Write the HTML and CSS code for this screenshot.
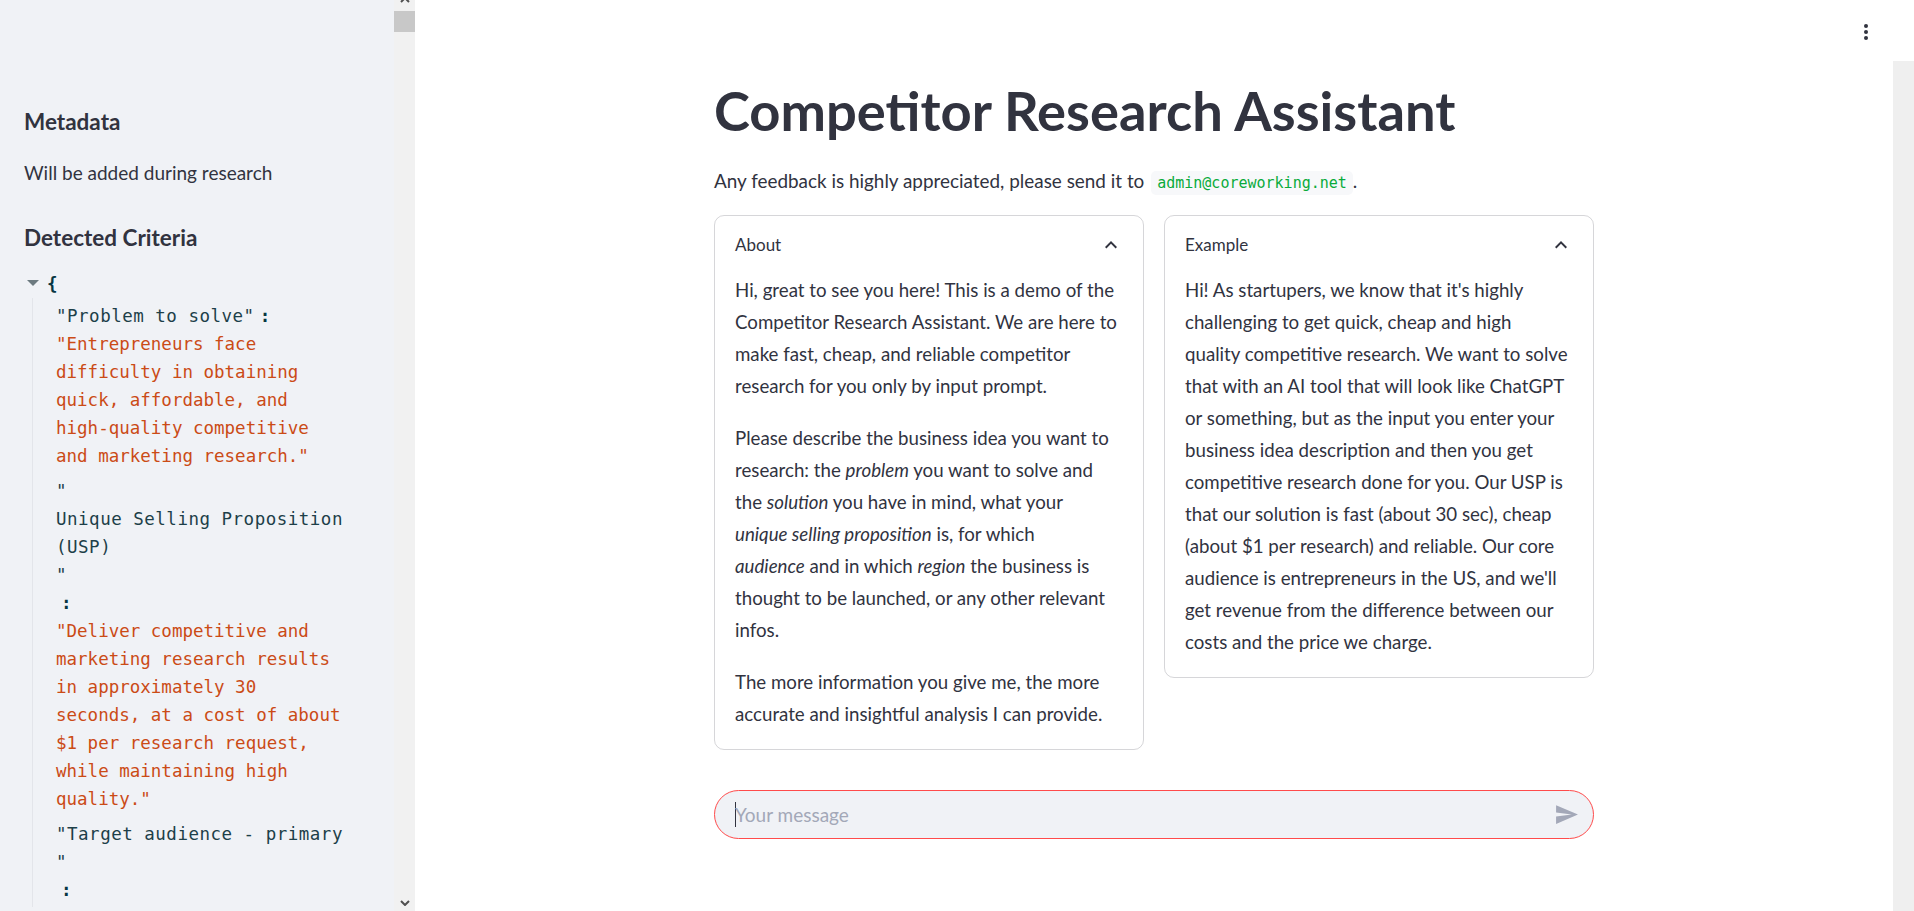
FILE: index.html
```html
<!DOCTYPE html>
<html lang="en">
<head>
<meta charset="utf-8">
<title>Competitor Research Assistant</title>
<link rel="stylesheet" href="styles.css">
</head>
<body>
<div class="app">
  <aside class="sidebar">
    <div class="sidebar-content">
      <h3 class="side-heading">Metadata</h3>
      <p class="side-text">Will be added during research</p>
      <h3 class="side-heading side-heading-2">Detected Criteria</h3>
      <div class="json">
        <div class="json-open"><span class="caret"></span><span class="brace">{</span></div>
        <div class="json-body">
          <div class="json-row">
            <div class="json-line"><span class="json-key">"Problem to solve"</span><span class="json-colon">:</span></div>
            <div class="json-string">"Entrepreneurs face<br>difficulty in obtaining<br>quick, affordable, and<br>high-quality competitive<br>and marketing research."</div>
          </div>
          <div class="json-row">
            <div class="json-key json-key-block">"<br>Unique Selling Proposition<br>(USP)<br>"</div>
            <div class="json-line"><span class="json-colon">:</span></div>
            <div class="json-string">"Deliver competitive and<br>marketing research results<br>in approximately 30<br>seconds, at a cost of about<br>$1 per research request,<br>while maintaining high<br>quality."</div>
          </div>
          <div class="json-row">
            <div class="json-key json-key-block">"Target audience - primary<br>"</div>
            <div class="json-line"><span class="json-colon">:</span></div>
          </div>
        </div>
      </div>
    </div>
    <div class="side-scroll">
      <svg class="scroll-arrow scroll-arrow-up" width="10" height="6" viewBox="0 0 10 6"><path d="M1 5 L5 1 L9 5" fill="none" stroke="#505050" stroke-width="2"/></svg>
      <div class="scroll-thumb"></div>
      <div class="scroll-fill"></div>
      <svg class="scroll-arrow scroll-arrow-down" width="10" height="6" viewBox="0 0 10 6"><path d="M1 1 L5 5 L9 1" fill="none" stroke="#505050" stroke-width="2"/></svg>
    </div>
  </aside>

  <main class="main">
    <header class="topbar">
      <svg class="menu-dots" width="4" height="16" viewBox="0 0 4 16"><circle cx="2" cy="2" r="2" fill="#31333f"/><circle cx="2" cy="8" r="2" fill="#31333f"/><circle cx="2" cy="14" r="2" fill="#31333f"/></svg>
    </header>
    <div class="main-body">
      <div class="content">
        <div class="block">
          <h1 class="title">Competitor Research Assistant</h1>
          <p class="feedback">Any feedback is highly appreciated, please send it to <code class="code">admin@coreworking.net</code>.</p>

          <div class="cards">
            <section class="card">
              <div class="card-header">
                <span class="card-label">About</span>
                <svg class="chevron" width="24" height="24" viewBox="0 0 24 24"><path d="M12 8l-6 6 1.41 1.41L12 10.83l4.59 4.58L18 14z" fill="#31333f"/></svg>
              </div>
              <div class="card-body">
                <p>Hi, great to see you here! This is a demo of the<br>Competitor Research Assistant. We are here to<br>make fast, cheap, and reliable competitor<br>research for you only by input prompt.</p>
                <p>Please describe the business idea you want to<br>research: the <em>problem</em> you want to solve and<br>the <em>solution</em> you have in mind, what your<br><em>unique selling proposition</em> is, for which<br><em>audience</em> and in which <em>region</em> the business is<br>thought to be launched, or any other relevant<br>infos.</p>
                <p>The more information you give me, the more<br>accurate and insightful analysis I can provide.</p>
              </div>
            </section>
            <section class="card">
              <div class="card-header">
                <span class="card-label">Example</span>
                <svg class="chevron" width="24" height="24" viewBox="0 0 24 24"><path d="M12 8l-6 6 1.41 1.41L12 10.83l4.59 4.58L18 14z" fill="#31333f"/></svg>
              </div>
              <div class="card-body">
                <p>Hi! As startupers, we know that it's highly<br>challenging to get quick, cheap and high<br>quality competitive research. We want to solve<br>that with an AI tool that will look like ChatGPT<br>or something, but as the input you enter your<br>business idea description and then you get<br>competitive research done for you. Our USP is<br>that our solution is fast (about 30 sec), cheap<br>(about $1 per research) and reliable. Our core<br>audience is entrepreneurs in the US, and we'll<br>get revenue from the difference between our<br>costs and the price we charge.</p>
              </div>
            </section>
          </div>

          <div class="chat-input">
            <span class="text-caret"></span>
            <span class="placeholder">Your message</span>
            <svg class="send" width="25" height="25" viewBox="0 0 24 24"><path d="M2.01 21L23 12 2.01 3 2 10l15 2-15 2z" fill="#a3a8b8"/></svg>
          </div>
        </div>
      </div>
      <div class="main-track"></div>
    </div>
  </main>
</div>
</body>
</html>
```

FILE: styles.css
```css
* { box-sizing: border-box; }

html, body {
  margin: 0;
  padding: 0;
}

body {
  width: 1914px;
  height: 911px;
  overflow: hidden;
  background: #ffffff;
  color: #31333f;
  font-family: "Source Sans Pro", Lato, "Noto Sans", sans-serif;
}

.app {
  display: flex;
  height: 911px;
}

/* ---------- Sidebar ---------- */
.sidebar {
  width: 415px;
  flex: none;
  display: flex;
  background: #f0f2f6;
  overflow: hidden;
}

.sidebar-content {
  flex: 1;
  min-width: 0;
  padding: 107px 0 0 24px;
}

.side-heading {
  margin: 0;
  font-size: 22.5px;
  font-weight: 700;
  line-height: 29px;
  color: #31333f;
}

.side-heading-2 {
  margin-top: 34px;
}

.side-text {
  margin: 21px 0 0;
  font-size: 19px;
  line-height: 32px;
}

.json {
  margin-top: 18px;
  font-family: "DejaVu Sans Mono", "Liberation Mono", monospace;
  font-size: 17.5px;
  line-height: 28px;
}

.json-open {
  display: flex;
  align-items: center;
  height: 28px;
}

.caret {
  width: 0;
  height: 0;
  margin: 0 8px 3px 3px;
  border-left: 6px solid transparent;
  border-right: 6px solid transparent;
  border-top: 6px solid #6c7a80;
}

.brace {
  color: #073642;
  font-weight: bold;
}

.json-body {
  margin-left: 8px;
  border-left: 1px solid #e3e5ea;
  padding-left: 23px;
}

.json-row {
  padding: 3.5px 0;
}

.json-key {
  color: #1d3f49;
  letter-spacing: 0.5px;
}

.json-key-block {
  display: block;
}

.json-colon {
  display: inline-block;
  margin: 0 5px;
  color: #073642;
  font-weight: bold;
}

.json-string {
  color: #cb4b16;
  white-space: nowrap;
}

.side-scroll {
  width: 21px;
  flex: none;
  display: flex;
  flex-direction: column;
  align-items: center;
  background: #f1f1f1;
}

.scroll-arrow-up {
  margin-top: -3px;
  flex: none;
}

.scroll-thumb {
  width: 21px;
  height: 21px;
  margin-top: 8px;
  background: #c8c8c8;
  flex: none;
}

.scroll-fill {
  flex: 1;
}

.scroll-arrow-down {
  margin-bottom: 5px;
  flex: none;
}

/* ---------- Main ---------- */
.main {
  flex: 1;
  min-width: 0;
  display: flex;
  flex-direction: column;
}

.topbar {
  height: 61px;
  flex: none;
  display: flex;
  justify-content: flex-end;
  align-items: flex-start;
  padding: 24px 46px 0 0;
}

.main-body {
  flex: 1;
  min-height: 0;
  display: flex;
}

.content {
  flex: 1;
  display: flex;
  justify-content: center;
}

.main-track {
  width: 21px;
  flex: none;
  background: #efefef;
}

.block {
  width: 880px;
  padding-top: 16px;
}

.title {
  margin: 0;
  font-size: 54.3px;
  line-height: 66px;
  font-weight: 700;
  color: #31333f;
}

.feedback {
  margin: 21.5px 0 0;
  font-size: 18.9px;
  line-height: 32px;
}

.code {
  font-family: "DejaVu Sans Mono", "Liberation Mono", monospace;
  font-size: 15px;
  color: #09ab3b;
  background: #f7f8fa;
  padding: 3px 6px;
  border-radius: 5px;
  margin-left: 2px;
}

.cards {
  display: flex;
  align-items: flex-start;
  gap: 20px;
  margin-top: 16px;
}

.card {
  flex: 1;
  min-width: 0;
  border: 1px solid rgba(49, 51, 63, 0.2);
  border-radius: 10px;
}

.card-header {
  display: flex;
  align-items: center;
  justify-content: space-between;
  padding: 17px 20px 17px;
  font-size: 17px;
  line-height: 24px;
}

.card-body {
  padding: 0 20px 19px;
  font-size: 18.7px;
  line-height: 32px;
}

.card-body p {
  margin: 0 0 20px;
  white-space: nowrap;
}

.card-body p:last-child {
  margin-bottom: 0;
}

.chat-input {
  margin-top: 40px;
  height: 49px;
  display: flex;
  align-items: center;
  padding: 0 14px 0 20px;
  background: #f0f2f6;
  border: 1px solid #ff4b4b;
  border-radius: 25px;
}

.text-caret {
  width: 1px;
  height: 25px;
  background: #31333f;
  margin-right: -1px;
  flex: none;
}

.placeholder {
  flex: 1;
  font-size: 19px;
  color: #a3a8b8;
}

.send {
  flex: none;
}
```
